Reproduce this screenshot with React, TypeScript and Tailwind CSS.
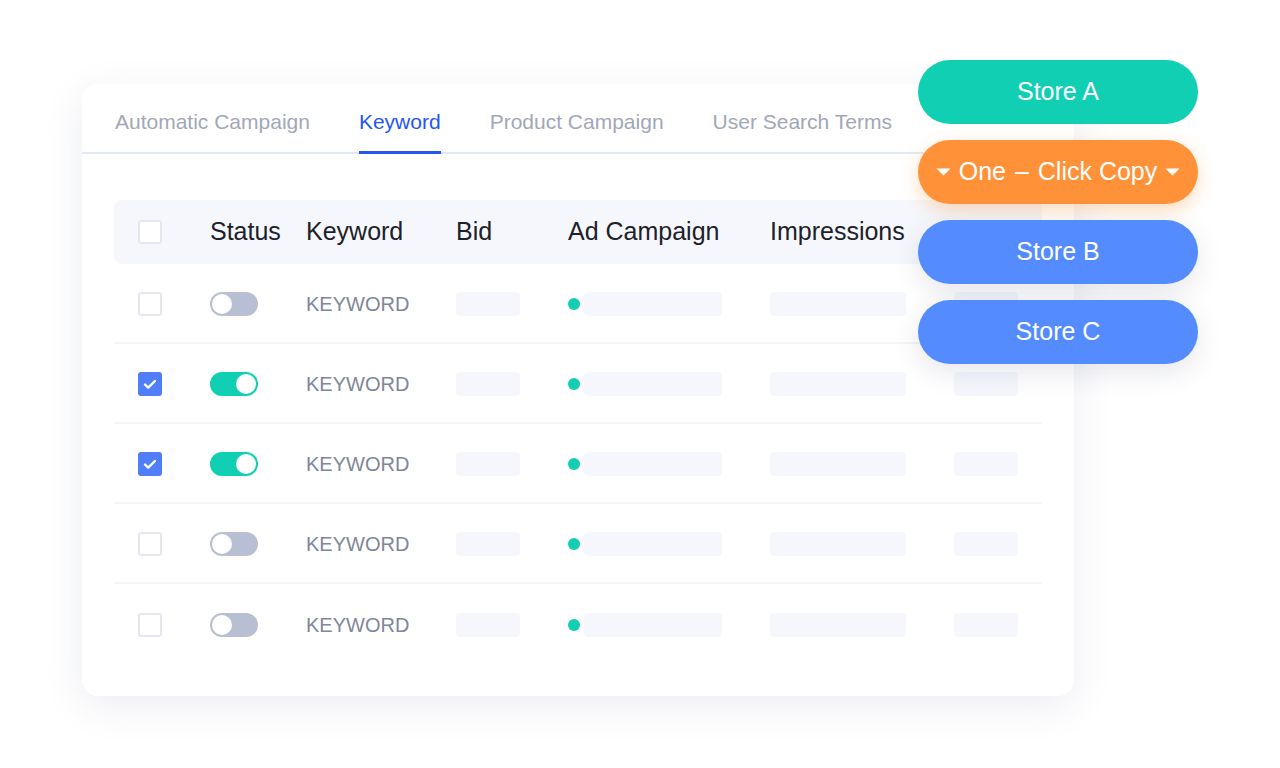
import React from "react";

const tabs = ["Automatic Campaign", "Keyword", "Product Campaign", "User Search Terms"];
const rows = [false, true, true, false, false];

const Caret = () => (
  <svg width="15" height="8" viewBox="0 0 15 8" className="shrink-0">
    <path d="M0.5 0.5h14l-7 7z" fill="#ffffff" />
  </svg>
);

const Checkbox = ({ checked }: { checked: boolean }) =>
  checked ? (
    <div className="w-6 h-6 rounded-[3px] bg-[#4f7ef8] flex items-center justify-center">
      <svg width="14" height="11" viewBox="0 0 14 11">
        <path d="M2 5.5l3.2 3.2L12 2" stroke="#fff" strokeWidth="2.4" fill="none" strokeLinecap="round" strokeLinejoin="round" />
      </svg>
    </div>
  ) : (
    <div className="w-6 h-6 rounded-[3px] border-2 border-[#e4e7ef] bg-white" />
  );

const Toggle = ({ on }: { on: boolean }) => (
  <div
    className={
      on
        ? "w-12 h-6 rounded-full bg-[#10cfb2] p-[2px] flex justify-end"
        : "w-12 h-6 rounded-full bg-[#b9bfd2] p-[2px] flex justify-start"
    }
  >
    <div className="w-5 h-5 rounded-full bg-white" />
  </div>
);

const Bar = ({ w }: { w: string }) => <div className={`${w} h-6 rounded bg-[#f5f7fc]`} />;

export default function App() {
  return (
    <div className="relative w-[1280px] h-[768px] bg-white overflow-hidden font-['Liberation_Sans',Arial,sans-serif]">
      <div className="ml-[82px] mt-[84px] w-[992px] h-[612px] bg-white rounded-2xl shadow-[0_10px_40px_rgba(40,50,110,0.09)]">
        {/* tabs */}
        <div className="flex gap-[49px] pl-[33px] border-b-2 border-[#e2e9f4]">
          {tabs.map((t) => (
            <div
              key={t}
              className={
                t === "Keyword"
                  ? "pt-[26px] pb-[17px] -mb-[2px] border-b-[3px] border-[#2456f5] text-[21px] leading-6 text-[#2456f5]"
                  : "pt-[26px] pb-[17px] -mb-[2px] border-b-[3px] border-transparent text-[21px] leading-6 text-[#a2a7b7]"
              }
            >
              {t}
            </div>
          ))}
        </div>

        {/* table */}
        <div className="mx-8 mt-[46px]">
          <div className="grid grid-cols-[72px_96px_150px_112px_202px_184px_1fr] items-center h-16 pl-6 rounded-lg bg-[#f5f7fc] text-[25px] text-[#1d2129]">
            <Checkbox checked={false} />
            <div>Status</div>
            <div>Keyword</div>
            <div>Bid</div>
            <div>Ad Campaign</div>
            <div>Impressions</div>
            <div />
          </div>
          {rows.map((on, i) => (
            <div
              key={i}
              className={
                i < rows.length - 1
                  ? "grid grid-cols-[72px_96px_150px_112px_202px_184px_1fr] items-center h-20 pt-[2px] pl-6 border-b-2 border-[#f3f5fa]"
                  : "grid grid-cols-[72px_96px_150px_112px_202px_184px_1fr] items-center h-20 pt-[2px] pl-6"
              }
            >
              <Checkbox checked={on} />
              <Toggle on={on} />
              <div className="text-[20px] text-[#80869b]">KEYWORD</div>
              <Bar w="w-16" />
              <div className="flex items-center gap-1">
                <div className="w-3 h-3 rounded-full bg-[#10cfb2]" />
                <Bar w="w-[138px]" />
              </div>
              <Bar w="w-[136px]" />
              <Bar w="w-16" />
            </div>
          ))}
        </div>
      </div>

      {/* store menu */}
      <div className="absolute left-[918px] top-[60px] w-[280px] flex flex-col gap-4 text-[25px] text-white">
        <div className="h-16 rounded-full bg-[#10cfb2] flex items-center justify-center">Store A</div>
        <div className="h-16 rounded-full bg-[#ff9238] flex items-center justify-center gap-[8px] shadow-[0_6px_18px_rgba(255,150,60,0.35)]">
          <Caret />
          <span>
            One <span className="mx-[2px]">–</span> Click Copy
          </span>
          <Caret />
        </div>
        <div className="h-16 rounded-full bg-[#548cff] flex items-center justify-center shadow-[0_8px_28px_rgba(40,50,90,0.12)]">Store B</div>
        <div className="h-16 rounded-full bg-[#548cff] flex items-center justify-center shadow-[0_8px_28px_rgba(40,50,90,0.12)]">Store C</div>
      </div>
    </div>
  );
}
